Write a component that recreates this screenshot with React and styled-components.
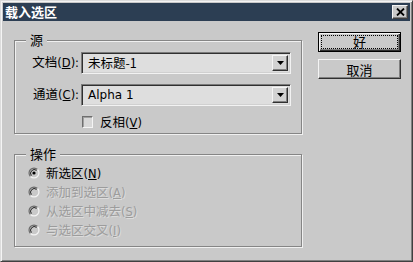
import React from "react";
import styled, { createGlobalStyle } from "styled-components";

const Global = createGlobalStyle`
  html, body { margin: 0; padding: 0; background: #c8c8c8; }
  body { font-family: "Noto Sans CJK SC", "Noto Sans", sans-serif; }
  * { box-sizing: border-box; }
`;

const Window = styled.div`
  width: 413px;
  height: 262px;
  background: #c9c9c9;
  border: 1px solid;
  border-color: #dcdcdc #404040 #404040 #dcdcdc;
  box-shadow: inset 1px 1px 0 #f4f4f4, inset -1px -1px 0 #808080;
  padding: 2px;
  display: flex;
  flex-direction: column;
`;

const TitleBar = styled.div`
  height: 18px;
  background: #2c3e53;
  display: flex;
  align-items: center;
  justify-content: space-between;
  padding: 0 2px 0 2px;
`;

const Title = styled.span`
  color: #fff;
  font-weight: bold;
  font-size: 13px;
  line-height: 18px;
  letter-spacing: 0px;
`;

const CloseBtn = styled.div`
  width: 16px;
  height: 14px;
  background: #c9c9c9;
  border: 1px solid;
  border-color: #f4f4f4 #404040 #404040 #f4f4f4;
  box-shadow: inset -1px -1px 0 #808080;
  display: flex;
  align-items: center;
  justify-content: center;
`;

const Body = styled.div`
  display: flex;
  padding: 11px 0 0 11px;
`;

const LeftCol = styled.div`
  display: flex;
  flex-direction: column;
  gap: 20px;
  padding-top: 8px;
`;

const Group = styled.div`
  position: relative;
  width: 288px;
  height: ${(p) => p.$h}px;
  border: 1px solid #858585;
  box-shadow: inset 1px 1px 0 #f0f0f0, 1px 1px 0 #f0f0f0;
  padding: ${(p) => p.$pad};
`;

const Legend = styled.span`
  position: absolute;
  left: 11px;
  top: -9px;
  padding: 0 4px;
  background: #c9c9c9;
  font-size: 13px;
  line-height: 16px;
  color: #000;
`;

const FormGrid = styled.div`
  display: grid;
  grid-template-columns: 64px 210px;
  column-gap: 2px;
  row-gap: 9px;
  align-items: center;
`;

const Label = styled.label`
  font-size: 12.5px;
  line-height: 22px;
  text-align: right;
  color: #000;
  white-space: nowrap;
`;

const U = styled.u`
  text-decoration: underline;
  text-underline-offset: 1px;
  font-family: "DejaVu Sans", sans-serif;
  font-size: 11.5px;
`;

const Paren = styled.span`
  font-family: "DejaVu Sans", sans-serif;
  font-size: 11.5px;
`;

const Select = styled.div`
  height: 22px;
  background: #dedede;
  border: 1px solid;
  border-color: #7a7a7a #f2f2f2 #f2f2f2 #7a7a7a;
  box-shadow: inset 1px 1px 0 #303030, inset -1px -1px 0 #d0d0d0;
  display: flex;
  align-items: center;
  justify-content: space-between;
  padding: 0 2px 0 6px;
  font-size: 12.5px;
  color: #000;
`;

const SelectText = styled.span`
  font-family: ${(p) => (p.$latin ? '"DejaVu Sans", sans-serif' : '"Noto Sans CJK SC", sans-serif')};
  font-size: ${(p) => (p.$latin ? "12px" : "12.5px")};
  line-height: 18px;
`;

const DropBtn = styled.div`
  width: 16px;
  height: 16px;
  background: #d2d2d2;
  border: 1px solid;
  border-color: #f4f4f4 #303030 #303030 #f4f4f4;
  box-shadow: inset -1px -1px 0 #808080;
  display: flex;
  align-items: center;
  justify-content: center;
`;

const CheckRow = styled.div`
  grid-column: 2;
  display: flex;
  align-items: center;
  gap: 7px;
  height: 13px;
  font-size: 12.5px;
  padding-left: 1px;
`;

const CheckBox = styled.span`
  width: 11px;
  height: 12px;
  background: #d8d8d8;
  border: 1px solid;
  border-color: #6e6e6e #f4f4f4 #f4f4f4 #6e6e6e;
  box-shadow: inset 1px 1px 0 #a0a0a0;
`;

const RadioList = styled.div`
  display: flex;
  flex-direction: column;
`;

const RadioRow = styled.div`
  height: 19px;
  display: flex;
  align-items: center;
  gap: 6px;
  font-size: 12.5px;
  color: ${(p) => (p.$disabled ? "#9c9c9c" : "#000")};
  text-shadow: ${(p) => (p.$disabled ? "1px 1px 0 #dcdcdc" : "none")};
`;

const RightCol = styled.div`
  display: flex;
  flex-direction: column;
  gap: 7px;
  margin-left: 16px;
`;

const Button = styled.div`
  width: 83px;
  height: 20px;
  background: #c9c9c9;
  border: 1px solid;
  border-color: ${(p) => (p.$default ? "#000" : "#f4f4f4 #303030 #303030 #f4f4f4")};
  box-shadow: ${(p) =>
    p.$default
      ? "inset 1px 1px 0 #f4f4f4, inset -1px -1px 0 #303030, inset -2px -2px 0 #808080"
      : "inset -1px -1px 0 #808080"};
  display: flex;
  align-items: center;
  justify-content: center;
  font-size: 13px;
  color: #000;
  padding: 2px;
`;

const Focus = styled.div`
  width: 100%;
  height: 100%;
  border: 1px dotted #000;
  display: flex;
  align-items: center;
  justify-content: center;
  line-height: 14px;
`;

const Radio = ({ checked }) => (
  <svg width="12" height="12" viewBox="0 0 12 12">
    <path d="M9.5 2.5 A4.9 4.9 0 0 0 2.5 9.5" fill="none" stroke="#6a6a6a" strokeWidth="1.2" />
    <path d="M8.6 3.4 A3.7 3.7 0 0 0 3.4 8.6" fill="none" stroke="#202020" strokeWidth="1" />
    <path d="M2.5 9.5 A4.9 4.9 0 0 0 9.5 2.5" fill="none" stroke="#f4f4f4" strokeWidth="1.2" />
    {checked && <circle cx="6" cy="6" r="1.6" fill="#000" />}
  </svg>
);

export default function App() {
  return (
    <>
      <Global />
      <Window>
        <TitleBar>
          <Title>载入选区</Title>
          <CloseBtn>
            <svg width="9" height="8" viewBox="0 0 9 8">
              <path d="M1 0.5 L8 7.5 M8 0.5 L1 7.5" stroke="#000" strokeWidth="1.8" />
            </svg>
          </CloseBtn>
        </TitleBar>
        <Body>
          <LeftCol>
            <Group $h={94} $pad="10px 0 0 0">
              <Legend>源</Legend>
              <FormGrid>
                <Label>
                  文档<Paren>(</Paren><U>D</U><Paren>):</Paren>
                </Label>
                <Select>
                  <SelectText>未标题-1</SelectText>
                  <DropBtn>
                    <svg width="7" height="4" viewBox="0 0 7 4">
                      <path d="M0 0 H7 L3.5 4 Z" fill="#000" />
                    </svg>
                  </DropBtn>
                </Select>
                <Label>
                  通道<Paren>(</Paren><U>C</U><Paren>):</Paren>
                </Label>
                <Select>
                  <SelectText $latin>Alpha 1</SelectText>
                  <DropBtn>
                    <svg width="7" height="4" viewBox="0 0 7 4">
                      <path d="M0 0 H7 L3.5 4 Z" fill="#000" />
                    </svg>
                  </DropBtn>
                </Select>
                <CheckRow>
                  <CheckBox />
                  <span>
                    反相<Paren>(</Paren><U>V</U><Paren>)</Paren>
                  </span>
                </CheckRow>
              </FormGrid>
            </Group>
            <Group $h={93} $pad="8px 0 0 13px">
              <Legend>操作</Legend>
              <RadioList>
                <RadioRow>
                  <Radio checked />
                  <span>新选区<Paren>(</Paren><U>N</U><Paren>)</Paren></span>
                </RadioRow>
                <RadioRow $disabled>
                  <Radio />
                  <span>添加到选区<Paren>(</Paren><U>A</U><Paren>)</Paren></span>
                </RadioRow>
                <RadioRow $disabled>
                  <Radio />
                  <span>从选区中减去<Paren>(</Paren><U>S</U><Paren>)</Paren></span>
                </RadioRow>
                <RadioRow $disabled>
                  <Radio />
                  <span>与选区交叉<Paren>(</Paren><U>I</U><Paren>)</Paren></span>
                </RadioRow>
              </RadioList>
            </Group>
          </LeftCol>
          <RightCol>
            <Button $default>
              <Focus>好</Focus>
            </Button>
            <Button>取消</Button>
          </RightCol>
        </Body>
      </Window>
    </>
  );
}
